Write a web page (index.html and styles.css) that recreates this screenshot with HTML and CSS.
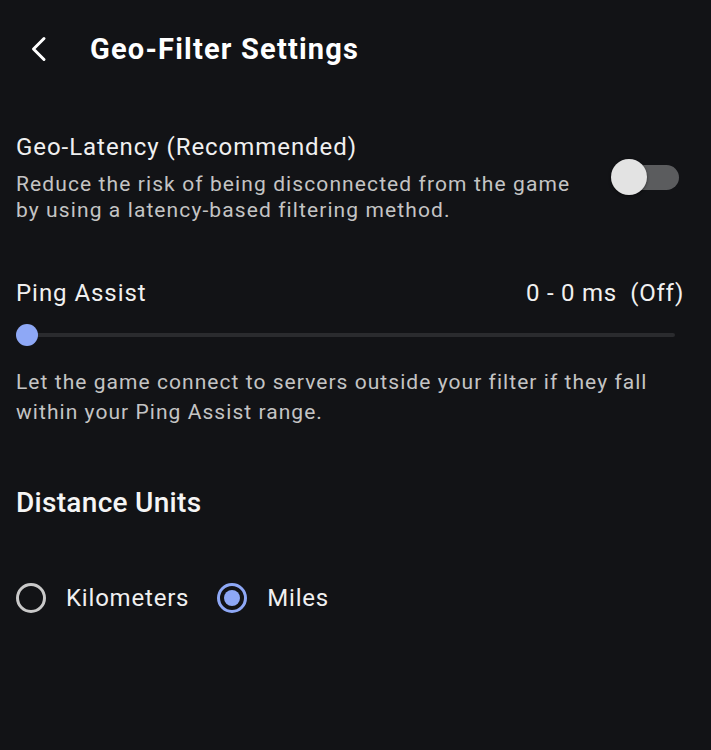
FILE: index.html
```html
<!DOCTYPE html>
<html lang="en">
<head>
  <meta charset="UTF-8">
  <title>Geo-Filter Settings</title>
  <link rel="stylesheet" href="styles.css">
</head>
<body>
  <div class="screen">
    <header class="topbar">
      <button class="back" aria-label="Back">
        <svg width="20" height="26" viewBox="0 0 20 26"><path d="M15 2.5 L4.5 13 L15 23.5" fill="none" stroke="#fff" stroke-width="3" stroke-linecap="round" stroke-linejoin="round"/></svg>
      </button>
      <h1>Geo-Filter Settings</h1>
    </header>

    <section class="setting">
      <div class="setting-text">
        <div class="setting-title">Geo-Latency (Recommended)</div>
        <p class="setting-desc">Reduce the risk of being disconnected from the game by using a latency-based filtering method.</p>
      </div>
      <div class="toggle"><span class="toggle-thumb"></span></div>
    </section>

    <section class="ping">
      <div class="ping-head">
        <span class="setting-title">Ping Assist</span>
        <span class="ping-value">0 - 0 ms&nbsp; (Off)</span>
      </div>
      <div class="slider">
        <span class="slider-thumb"></span>
      </div>
      <p class="ping-desc">Let the game connect to servers outside your filter if they fall within your Ping Assist range.</p>
    </section>

    <section class="units">
      <h2>Distance Units</h2>
      <div class="radios">
        <label class="radio"><span class="radio-dot"></span>Kilometers</label>
        <label class="radio checked"><span class="radio-dot"></span>Miles</label>
      </div>
    </section>
  </div>
</body>
</html>
```

FILE: styles.css
```css
body {
  margin: 0;
  background: #121316;
  color: #fff;
  font-family: Roboto, 'Noto Sans', sans-serif;
}

.screen {
  padding: 0 16px;
}

.topbar {
  display: flex;
  align-items: center;
  height: 98px;
}

.back {
  background: none;
  border: none;
  padding: 0;
  width: 20px;
  margin: 0 0 0 13px;
  display: flex;
  align-items: center;
  cursor: pointer;
}

h1 {
  margin: 0 0 0 41px;
  font-size: 29px;
  font-weight: 700;
  letter-spacing: 1.2px;
}

.setting {
  display: flex;
  align-items: center;
  justify-content: space-between;
  margin-top: 34px;
}

.setting-title {
  font-size: 24px;
  line-height: 30px;
  letter-spacing: 0.95px;
  color: #f0f0f0;
}

.setting-desc {
  margin: 9px 0 0;
  font-size: 21px;
  line-height: 26px;
  letter-spacing: 1.1px;
  color: #c4c4c4;
  width: 570px;
}

.toggle {
  position: relative;
  width: 58px;
  height: 25px;
  margin-right: 16px;
  border-radius: 13px;
  background: #5b5c5e;
}

.toggle-thumb {
  position: absolute;
  left: -10px;
  top: -6px;
  width: 36px;
  height: 36px;
  border-radius: 50%;
  background: #e3e3e3;
  box-shadow: 0 1px 3px rgba(0, 0, 0, 0.5);
}

.ping {
  margin-top: 55px;
}

.ping-head {
  display: flex;
  justify-content: space-between;
  align-items: baseline;
}

.ping-value {
  font-size: 24px;
  letter-spacing: 0.75px;
  color: #f0f0f0;
  margin-right: 11px;
}

.slider {
  position: relative;
  height: 4px;
  margin: 25px 20px 0 11px;
  background: #2a2b2e;
  border-radius: 2px;
}

.slider-thumb {
  position: absolute;
  left: -11px;
  top: -9px;
  width: 22px;
  height: 22px;
  border-radius: 50%;
  background: #8ea8f6;
}

.ping-desc {
  margin: 30px 0 0;
  font-size: 21px;
  line-height: 30px;
  letter-spacing: 1.05px;
  color: #c4c4c4;
  width: 660px;
}

.units h2 {
  margin: 59px 0 0;
  font-size: 28px;
  line-height: 34px;
  font-weight: 500;
  letter-spacing: 0.3px;
  color: #f5f5f5;
}

.radios {
  display: flex;
  gap: 28px;
  margin-top: 63px;
}

.radio {
  display: flex;
  align-items: center;
  gap: 20px;
  font-size: 24px;
  letter-spacing: 0.8px;
  color: #f0f0f0;
}

.radio-dot {
  width: 24px;
  height: 24px;
  border: 3px solid #c9c9c9;
  border-radius: 50%;
  position: relative;
}

.radio.checked .radio-dot {
  border-color: #8ea8f6;
}

.radio.checked .radio-dot::after {
  content: "";
  position: absolute;
  left: 4px;
  top: 4px;
  width: 16px;
  height: 16px;
  border-radius: 50%;
  background: #8ea8f6;
}
```
